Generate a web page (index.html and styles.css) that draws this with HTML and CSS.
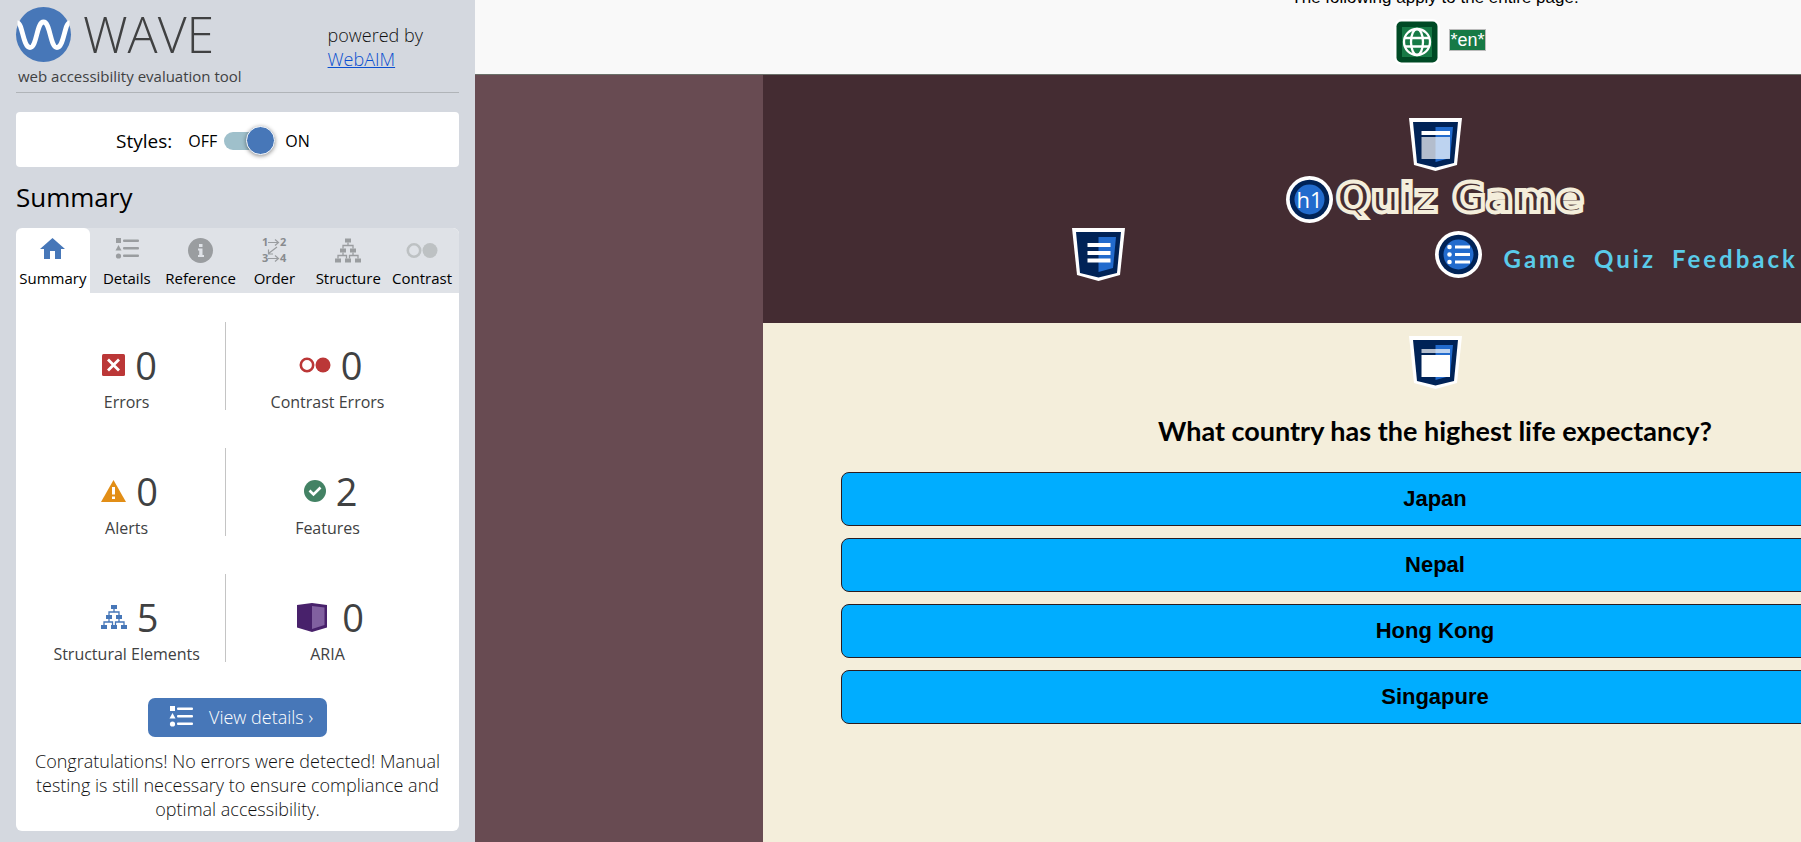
FILE: index.html
```html
<!DOCTYPE html>
<html lang="en">
<head>
<meta charset="utf-8">
<title>WAVE Report of Quiz Game</title>
<link rel="stylesheet" href="styles.css">
</head>
<body>
<svg class="defs" aria-hidden="true">
  <symbol id="i-details" viewBox="0 0 24 21">
    <rect x="1" y="0" width="5" height="5"/><path d="M3.500 7 6.500 12.500h-6z"/><circle cx="3.500" cy="18" r="2.600"/>
    <rect x="8" y="1.500" width="16" height="2.600" rx="1"/><rect x="8" y="9" width="16" height="2.600" rx="1"/><rect x="8" y="16.500" width="16" height="2.600" rx="1"/>
  </symbol>
  <symbol id="i-structure" viewBox="0 0 26 24">
    <rect x="10" y="0" width="6" height="4"/><rect x="5" y="10" width="6" height="4"/><rect x="15" y="10" width="6" height="4"/>
    <rect x="0" y="20" width="6" height="4"/><rect x="10" y="20" width="6" height="4"/><rect x="20" y="20" width="6" height="4"/>
    <path d="M13 4v3M8 10V7h10v3M8 14v3M18 14v3M3 20v-3h8.500v3M14.500 20v-3H23v3" fill="none" stroke="currentColor" stroke-width="1.300"/>
  </symbol>
  <symbol id="i-contrast" viewBox="0 0 32 16">
    <circle cx="8" cy="8" r="6.200" fill="none" stroke="currentColor" stroke-width="2.600"/><circle cx="24" cy="8" r="7.500"/>
  </symbol>
  <symbol id="i-shield" viewBox="0 0 53 53">
    <path fill="#fff" d="M0 0h53l-5 47-21.500 6L5 47z"/><path fill="#002357" d="M4 4h45l-4 41-18.500 4.500L8 45z"/><path fill="#226bcd" d="M26.500 9H44l-3 31-14.500 4z"/>
  </symbol>
</svg>
<div class="app">
  <aside class="sidebar">
    <header class="brand">
      <div>
        <div class="logo">
          <svg width="55" height="55" viewBox="0 0 55 55" aria-hidden="true"><circle cx="27.500" cy="27.500" r="27.500" fill="#4777b8"/><path d="M1.500 16C6.500 16 7 40.500 14 40.500S20.500 15 27.500 15 34 40.500 41 40.500 48.500 16 53.500 16" fill="none" stroke="#fff" stroke-width="4.800"/></svg>
          <span class="logo-name">WAVE</span>
        </div>
        <p class="tagline">web accessibility evaluation tool</p>
      </div>
      <p class="powered">powered by<br><a href="#webaim">WebAIM</a></p>
    </header>
    <div class="styles-box">
      <label class="styles-label" for="styles">Styles:</label>
      <span>OFF</span><input class="switch" type="checkbox" role="switch" id="styles" checked><span>ON</span>
    </div>
    <h2 class="heading">Summary</h2>
    <section class="panel">
      <div class="tabs" role="tablist">
        <button class="tab active" role="tab" aria-selected="true"><svg width="25" height="25" viewBox="0 0 25 25" aria-hidden="true"><path d="M12.500 0 25 11h-4v10h-6v-8h-5v8H4V11H0z"/></svg>Summary</button>
        <button class="tab" role="tab"><svg width="24" height="25" viewBox="0 0 24 25" aria-hidden="true"><use href="#i-details" width="24" height="21"/></svg>Details</button>
        <button class="tab" role="tab"><svg width="25" height="25" viewBox="0 0 25 25" aria-hidden="true"><circle cx="12.500" cy="12.500" r="12.500"/><path fill="#dfe2e7" d="M11 6h3.500v3H11zM10 10.500h4.500V17H16v2h-6v-2h1.200v-4.500H10z"/></svg>Reference</button>
        <button class="tab order" role="tab"><svg width="25" height="25" viewBox="0 0 25 25" aria-hidden="true"><text x="0" y="8">1</text><text x="18" y="8">2</text><text x="0" y="24">3</text><text x="18" y="24">4</text><path d="M6 4.500h10M13 1.500l3.500 3-3.500 3M6 20.500h10M13 17.500l3.500 3-3.500 3M15 9l-8.500 6.500M6.500 11.500v4.500H11" fill="none" stroke="currentColor" stroke-width="1.200"/></svg>Order</button>
        <button class="tab" role="tab"><svg width="26" height="25" aria-hidden="true"><use href="#i-structure" width="26" height="25"/></svg>Structure</button>
        <button class="tab pale" role="tab"><svg width="32" height="25" aria-hidden="true"><use href="#i-contrast" width="32" height="25"/></svg>Contrast</button>
      </div>
      <div class="counts">
        <div class="count"><div class="figure"><svg width="23" height="22" viewBox="0 0 23 22" aria-hidden="true"><rect width="23" height="22" rx="1.500" fill="#bb3737"/><path d="m6 5.500 11 11m0-11-11 11" stroke="#fff" stroke-width="2.800"/></svg><span>0</span></div><p>Errors</p></div>
        <div class="count"><div class="figure red"><svg width="32" height="22" aria-hidden="true"><use href="#i-contrast" width="32" height="22"/></svg><span>0</span></div><p>Contrast Errors</p></div>
        <div class="count"><div class="figure"><svg width="25" height="22" viewBox="0 0 25 22" aria-hidden="true"><path fill="#e28e16" d="M12.500 0 25 22H0z"/><path fill="#fff" d="M11 7h3v7.500h-3zM11 16.500h3V19h-3z"/></svg><span>0</span></div><p>Alerts</p></div>
        <div class="count"><div class="figure"><svg width="22" height="22" viewBox="0 0 22 22" aria-hidden="true"><circle cx="11" cy="11" r="11" fill="#438264"/><path d="m5.500 10.500 4 4 7-7" fill="none" stroke="#fff" stroke-width="2.600"/></svg><span>2</span></div><p>Features</p></div>
        <div class="count"><div class="figure blue"><svg width="26" height="24" aria-hidden="true"><use href="#i-structure" width="26" height="24"/></svg><span>5</span></div><p>Structural Elements</p></div>
        <div class="count"><div class="figure aria"><svg width="30" height="29" viewBox="0 0 30 29" aria-hidden="true"><path fill="#48216b" d="M0 2 15 0l15 2v22.500L15 29 0 24.500z"/><path fill="#8160a0" d="M15 3l12.500 1.500V22L15 26z"/></svg><span>0</span></div><p>ARIA</p></div>
      </div>
      <button class="view"><svg width="24" height="21" aria-hidden="true"><use href="#i-details"/></svg>View details ›</button>
      <p class="message">Congratulations! No errors were detected! Manual testing is still necessary to ensure compliance and optimal accessibility.</p>
    </section>
  </aside>
  <div class="viewport">
    <div class="site">
      <div class="global">
        <p>The following apply to the entire page:</p>
        <div class="global-icons">
          <svg width="46" height="46" viewBox="0 0 46 46" role="img" aria-label="Language"><rect width="46" height="46" rx="8" fill="#fff"/><rect x="2.500" y="2.500" width="41" height="41" rx="5" fill="#004a25"/><rect x="8" y="8" width="30" height="30" fill="#177a46"/><g fill="none" stroke="#fff" stroke-width="2.300"><circle cx="23" cy="23" r="13"/><ellipse cx="23" cy="23" rx="6" ry="13"/><path d="M11 19h24M11 27.500h24"/></g></svg>
          <span class="lang">*en*</span>
        </div>
      </div>
      <div class="backdrop">
        <div class="quiz">
          <header class="quiz-head">
            <svg class="badge" width="53" height="53" viewBox="0 0 53 53" aria-hidden="true"><use href="#i-shield"/><path fill="#fff" d="M12.500 13H41v4H12.500z"/><path fill="#fff" opacity=".7" d="M12.500 19H41v22H12.500z"/></svg>
            <div class="title-row">
              <svg width="47" height="47" viewBox="0 0 47 47" role="img" aria-label="Heading level 1"><circle cx="23.500" cy="23.500" r="23.500" fill="#fff"/><circle cx="23.500" cy="23.500" r="19.800" fill="#002357"/><circle cx="23.500" cy="23.500" r="15" fill="#226bcd"/><text class="badge-text" x="23.500" y="32" text-anchor="middle">h1</text></svg>
              <h1 class="title">Quiz Game</h1>
            </div>
            <nav class="nav">
              <svg class="badge" width="53" height="53" viewBox="0 0 53 53" aria-hidden="true"><use href="#i-shield"/><path fill="#fff" d="M15.500 15h23v4h-23zM15.500 23h23v4h-23zM15.500 30.500h23v4h-23z"/></svg>
              <div class="links">
                <svg width="47" height="47" viewBox="0 0 47 47" aria-hidden="true"><circle cx="23.500" cy="23.500" r="23.500" fill="#fff"/><circle cx="23.500" cy="23.500" r="19.800" fill="#002357"/><circle cx="23.500" cy="23.500" r="15" fill="#226bcd"/><g fill="#fff"><circle cx="14.500" cy="16" r="2.300"/><circle cx="14.500" cy="23.500" r="2.300"/><circle cx="14.500" cy="31" r="2.300"/><path d="M20 14.500h15v3H20zM20 22h15v3H20zM20 29.500h15v3H20z"/></g></svg>
                <a href="#game">Game</a><a href="#quiz">Quiz</a><a href="#feedback">Feedback</a>
              </div>
            </nav>
          </header>
          <main class="quiz-main">
            <svg class="badge" width="53" height="53" viewBox="0 0 53 53" aria-hidden="true"><use href="#i-shield"/><path fill="#fff" opacity=".7" d="M12.500 13H41v4H12.500z"/><path fill="#fff" d="M12.500 19H41v22H12.500z"/></svg>
            <h2 class="question">What country has the highest life expectancy?</h2>
            <div class="answers">
              <button class="answer">Japan</button>
              <button class="answer">Nepal</button>
              <button class="answer">Hong Kong</button>
              <button class="answer">Singapure</button>
            </div>
          </main>
        </div>
      </div>
    </div>
  </div>
</div>
</body>
</html>
```
FILE: styles.css
```css
* { box-sizing: border-box; }
body { margin: 0; font-family: "Open Sans", "Noto Sans", sans-serif; font-size: 16px; color: #404142; }
p, h1, h2 { margin: 0; font-weight: 400; }
button { font: inherit; cursor: pointer; }
svg { fill: currentColor; flex: none; overflow: visible; }
.defs { position: absolute; width: 0; height: 0; }
.app { display: flex; height: 100vh; overflow: hidden; }

.sidebar { flex: 0 0 475px; padding: 7px 16px 11px; background: #d4d8df; }
.brand { display: flex; justify-content: space-between; padding-bottom: 3px; border-bottom: 1px solid #b0b4b8; }
.logo { display: flex; align-items: center; gap: 12px; height: 55px; }
.logo-name { font-size: 50px; font-weight: 300; line-height: 55px; }
.tagline { padding: 1px 0 0 2px; font-size: 15px; line-height: 26px; }
.powered { padding: 16px 36px 0 0; font-size: 18px; line-height: 24px; font-weight: 300; color: #111; }
.powered a { color: #0a4fd0; }
.styles-box { display: flex; align-items: center; margin-top: 19px; height: 55px; padding: 2px 100px 0; background: #fff; border-radius: 4px; color: #000; }
.styles-label { margin-right: 16px; font-size: 19px; }
.switch { appearance: none; display: flex; align-items: center; justify-content: flex-end; width: 51px; height: 18px; margin: 0 10px 0 7px; border-radius: 9px; background: #9fc0cb; }
.switch::before { content: ""; flex: none; width: 27px; height: 27px; border: 1px solid #fff; border-radius: 50%; background: #4777b8; box-shadow: 0 1px 4px rgb(0 0 0 / 45%); }
.heading { padding: 12px 0 13px; color: #000; font-size: 26px; line-height: 36px; }
.panel { padding-bottom: 10px; background: #fff; border-radius: 6px; overflow: hidden; }
.tabs { display: grid; grid-template-columns: repeat(6, 1fr); background: #dfe2e7; color: #9a9da0; }
.tab { display: flex; flex-direction: column; align-items: center; gap: 5px; padding: 10px 0 5px; border: 0; background: none; font-size: 15px; line-height: 20px; color: #000; }
.tab svg { color: #9a9da0; }
.tab.pale svg { color: #bdc1c3; }
.tab.active { background: #fff; border-radius: 6px 6px 0 0; }
.tab.active svg { color: #4777b8; }
.order text { font-size: 11px; font-weight: 700; fill: #888b8e; }
.counts { display: grid; grid-template-columns: 46% 47%; row-gap: 38px; padding: 29px 0 0 12px; text-align: center; }
.count { padding-top: 17px; }
.count:nth-child(odd) { border-right: 1px solid #c4c4c4; }
.count p { padding-top: 3px; line-height: 16px; }
.figure { display: flex; justify-content: center; align-items: center; gap: 10px; height: 52px; padding-left: 6px; font-size: 38px; line-height: 52px; }
.figure.red svg { color: #bb3737; }
.figure.blue svg { color: #4777b8; }
.figure.aria { gap: 15px; }
.view { display: flex; align-items: center; gap: 16px; margin: 36px auto 12px; padding: 0 14px 2px 21px; height: 39px; border: 0; border-radius: 7px; background: #4777b8; color: #fff; font-size: 18px; font-weight: 300; }
.message { padding: 0 14px; font-size: 18px; font-weight: 300; line-height: 24px; text-align: center; color: #111; }

.viewport { flex: 1; min-width: 0; overflow: hidden; }
.site { display: flex; flex-direction: column; width: 1920px; height: 100%; }
.global { margin-top: -12px; padding-bottom: 9px; border-bottom: 1px solid #6b7069; background: #f9f9f9; color: #000; font: 17px/20px "Liberation Sans", Arial, sans-serif; text-align: center; }
.global-icons { display: flex; justify-content: center; align-items: center; gap: 9px; padding: 11px 0 0 10px; }
.lang { margin-bottom: 4px; border: 1px solid #bbb; background: #177a46; color: #fff; font-size: 18px; }
.backdrop { flex: 1; background: #684b52; }
.quiz { width: 70%; height: 100%; margin: 0 auto; background: #f4eedb; }
.quiz-head { display: flex; flex-direction: column; align-items: center; padding: 43px 0 42px; background: #442c32; }
.title-row { display: flex; align-items: flex-end; height: 52px; gap: 3px; }
.title { color: #442c32; font: 700 41px/50px "DejaVu Sans", sans-serif; -webkit-text-stroke: 4px #f4eedb; }
.badge-text { fill: #fff; font-size: 22px; }
.nav { display: grid; grid-template-columns: 1fr 1fr; width: 54%; padding-top: 5px; }
.links { display: flex; align-items: center; gap: 16px; }
.links svg { margin-right: 6px; }
.links a { color: #5acbe9; font: 700 24px/32px Lato, sans-serif; letter-spacing: 3px; text-decoration: none; padding-top: 8px; }
.quiz-main { display: flex; flex-direction: column; align-items: center; padding: 13px 78px; }
.question { padding: 22px 0; color: #000; font: 700 27px/39px Lato, sans-serif; }
.answers { display: grid; gap: 12px; width: 100%; }
.answer { height: 54px; padding-bottom: 2px; border: 1px solid #2b1c20; border-radius: 8px; background: #00adff; color: #000; font: 700 22px/28px "Liberation Sans", Arial, sans-serif; }
```
